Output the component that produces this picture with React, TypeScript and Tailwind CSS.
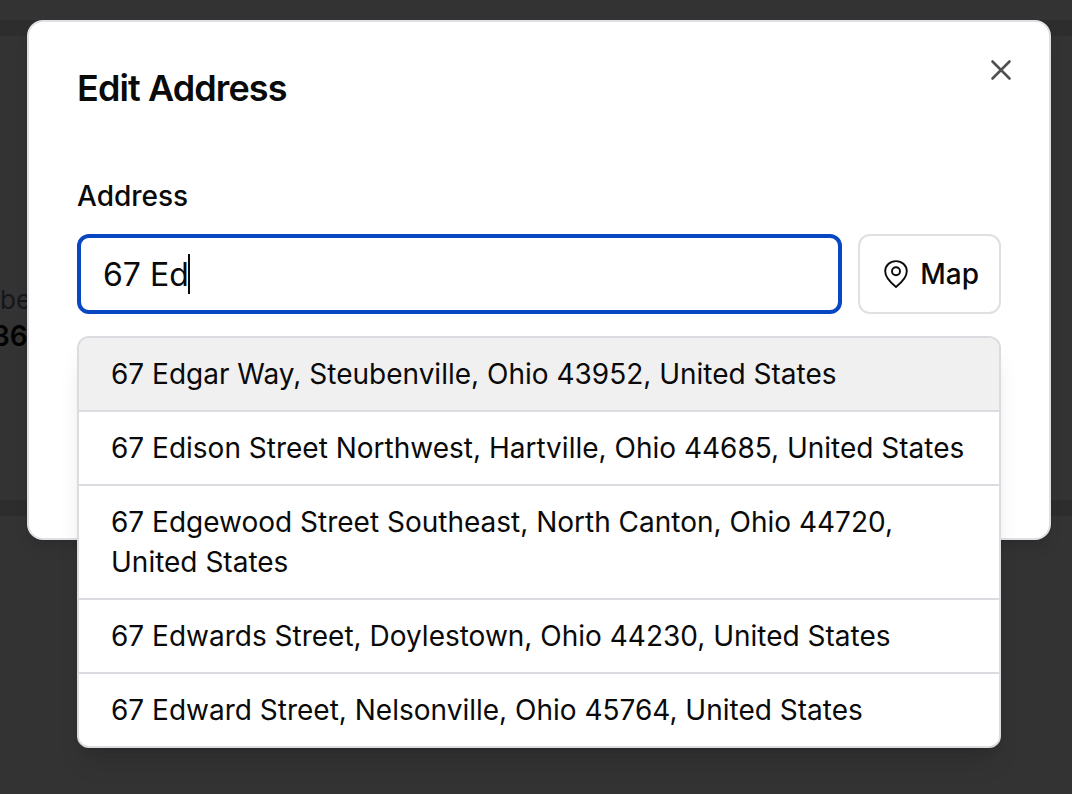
import React, { useState } from 'react';

const suggestions: string[] = [
  '67 Edgar Way, Steubenville, Ohio 43952, United States',
  '67 Edison Street Northwest, Hartville, Ohio 44685, United States',
  '67 Edgewood Street Southeast, North Canton, Ohio 44720, United States',
  '67 Edwards Street, Doylestown, Ohio 44230, United States',
  '67 Edward Street, Nelsonville, Ohio 45764, United States',
];

const PinIcon: React.FC = () => (
  <svg viewBox="0 0 28 32" className="h-8 w-7 shrink-0" fill="none" stroke="currentColor" strokeWidth="1.9" strokeLinejoin="round" aria-hidden="true">
    <path d="M24.8 13.3C24.8 18.8 20 24.2 14 29C8 24.2 3.2 18.800 3.200 13.300C3.200 7.300 8 3.100 14 3.100C20 3.100 24.800 7.300 24.800 13.300Z" />
    <circle cx="14" cy="13.300" r="4" />
  </svg>
);

const CloseIcon: React.FC = () => (
  <svg viewBox="0 0 24 24" className="size-6" fill="none" stroke="currentColor" strokeWidth="2.6" strokeLinecap="round" aria-hidden="true">
    <path d="M3.500 3.500L20.500 20.500M20.500 3.500L3.500 20.500" />
  </svg>
);

const PageBehind: React.FC = () => (
  <div className="absolute inset-0 overflow-hidden pt-5" aria-hidden="true">
    <div className="h-4 bg-[#2d2d2d]" />
    <div className="h-[464px] pt-[244px]">
      <p className="text-[26px] leading-10 text-[#16171b]">be</p>
      <p className="-ml-2 text-[28px] leading-8 font-semibold text-[#020202]">36</p>
    </div>
    <div className="h-4 bg-[#2d2d2d]" />
  </div>
);

const App: React.FC = () => {
  const [address, setAddress] = useState('67 Ed');
  const [active, setActive] = useState(0);

  return (
    <div className="relative min-h-screen bg-[#333333] py-5 pr-[21px] pl-[27px] font-['Inter',sans-serif] text-[#0a0a0a]">
      <PageBehind />

      <div role="dialog" aria-labelledby="dialog-title" className="relative mx-auto w-full max-w-5xl rounded-2xl border-2 border-[#dfdfe5] bg-white px-12 pt-[42px] pb-56 shadow-lg">
        <div className="flex items-start justify-between">
          <h2 id="dialog-title" className="text-[36px] leading-12 font-semibold tracking-tight">
            Edit Address
          </h2>
          <button type="button" aria-label="Close" className="-mt-1.5 -mr-3 text-[#505050]">
            <CloseIcon />
          </button>
        </div>

        <label htmlFor="address" className="mt-15 block text-[28px] leading-12 font-medium">
          Address
        </label>

        <div className="relative mt-3.5">
          <div className="flex gap-4">
            <div className="relative min-w-0 flex-1">
              <input
                id="address"
                type="text"
                autoComplete="off"
                value={address}
                onChange={(e) => setAddress(e.target.value)}
                className="h-20 w-full rounded-xl border-4 border-[#0847c2] bg-white px-[22px] text-[32px] caret-transparent outline-none"
              />
              {/* Text caret, follows the typed value */}
              <div className="pointer-events-none absolute inset-y-0 left-[25px] flex items-center text-[32px]" aria-hidden="true">
                <span className="invisible whitespace-pre">{address}</span>
                <span className="h-10 w-0.5 bg-[#0a0a0a]" />
              </div>
            </div>
            <button type="button" className="flex h-20 items-center gap-2.5 rounded-xl border-2 border-[#e0e0e0] pr-5 pl-[22px] text-[28px] font-medium">
              <PinIcon />
              Map
            </button>
          </div>

          <ul role="listbox" aria-label="Address suggestions" className="absolute inset-x-0 top-full mt-[22px] divide-y-2 divide-[#dcdce0] overflow-hidden rounded-xl border-2 border-[#dcdce0] bg-white shadow-xl">
            {suggestions.map((item, index) => (
              <li
                key={item}
                role="option"
                aria-selected={index === active}
                onMouseEnter={() => setActive(index)}
                onClick={() => setAddress(item)}
                className={`cursor-pointer px-8 py-4 text-[28px] leading-10 ${index === active ? 'bg-[#f0f0f0]' : 'bg-white'}`}
              >
                {item}
              </li>
            ))}
          </ul>
        </div>
      </div>
    </div>
  );
};

export default App;
